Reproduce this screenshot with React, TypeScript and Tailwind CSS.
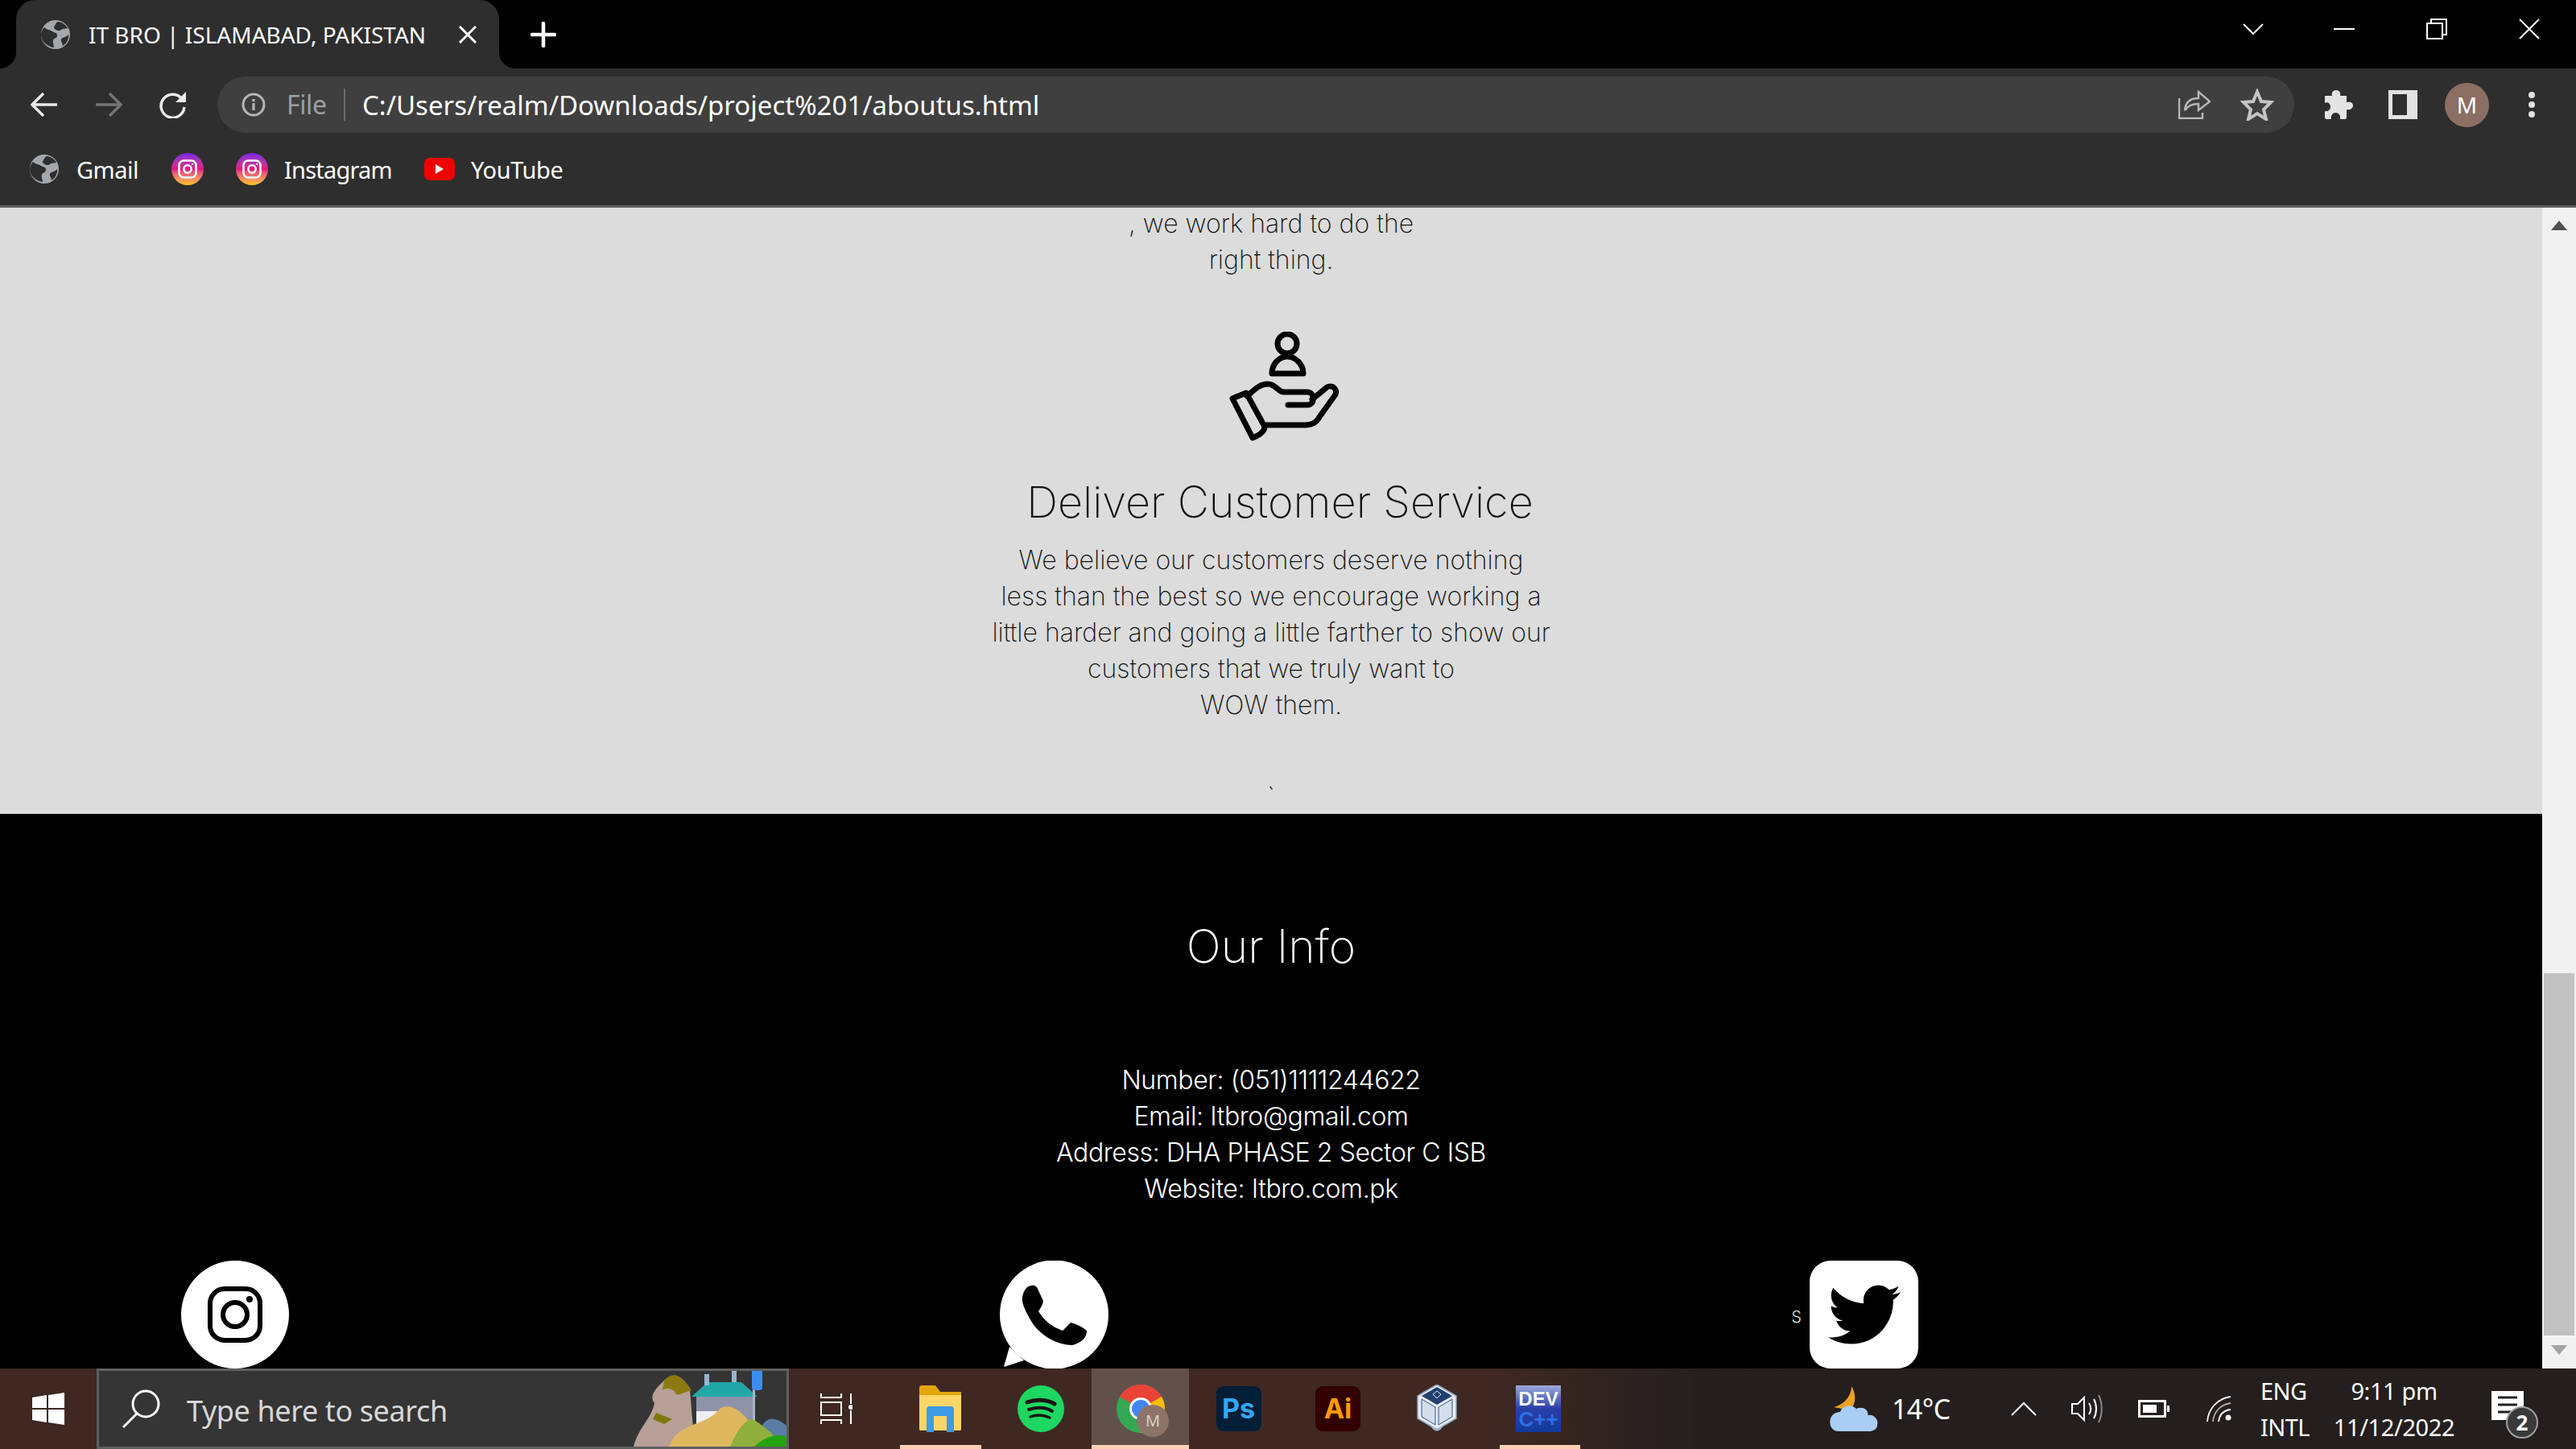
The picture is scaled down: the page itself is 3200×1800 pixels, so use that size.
import React from "react";
import { FaTwitter } from "react-icons/fa";

const ui = "font-['Noto_Sans','Open_Sans',sans-serif]";

function Globe({ cls }: { cls: string }) {
  return (
    <svg viewBox="0 0 36 36" className={cls}>
      <circle cx="18" cy="18" r="18" fill="#a3a8ad" />
      <path d="M4 9c3 3 7 3 10 5s6 1 6 5-4 3-5 6 1 6 1 9C8 33 0 27 0 18c0-3 2-7 4-9zM22 2c5 1 9 4 11 8-3 1-6 0-8 2s-6 1-8-1 0-4 1-6 2-3 4-3zM34 18c1 5-2 11-7 14 0-4-3-5-2-8s6-2 9-6z" fill="#2e2e2e" />
    </svg>
  );
}

function Insta() {
  return (
    <div className="w-[40px] h-[40px] rounded-full bg-linear-to-b from-[#7b1fe4] via-[#e3117f] to-[#ffc400] flex items-center justify-center">
      <svg viewBox="0 0 24 24" className="w-[28px] h-[28px]" fill="none" stroke="#ffffff" strokeWidth="2.2">
        <rect x="3" y="3" width="18" height="18" rx="5" />
        <circle cx="12" cy="12" r="4" />
        <circle cx="17.3" cy="6.7" r="1" fill="#ffffff" stroke="none" />
      </svg>
    </div>
  );
}

function ChromeLogo() {
  return (
    <svg viewBox="0 0 60 60" className="w-[60px] h-[60px]">
      <circle cx="30" cy="30" r="30" fill="#34a853" />
      <path d="M30 30 L4 15 A30 30 0 0 1 56 15 Z" fill="#ea4335" />
      <path d="M30 30 L56 15 A30 30 0 0 1 30 60 Z" fill="#fbbc04" />
      <circle cx="30" cy="30" r="14" fill="#ffffff" />
      <circle cx="30" cy="30" r="11" fill="#4285f4" />
    </svg>
  );
}

function Cortana() {
  return (
    <svg viewBox="0 0 190 94" className="w-[190px] h-[94px] self-end shrink-0 overflow-hidden">
      <path d="M0 94 C6 70 22 60 26 40 C18 30 30 20 38 12 C50 0 62 8 70 24 L76 94 Z" fill="#b6a097" />
      <path d="M38 12 C50 -2 62 8 72 24 L54 30 C50 22 42 20 36 24 Z" fill="#8c7a10" />
      <path d="M28 52 L48 60 L38 66 L24 60 Z" fill="#7f7808" />
      <rect x="78" y="32" width="72" height="62" fill="#8f93a8" />
      <rect x="78" y="50" width="36" height="44" fill="#eeeef4" />
      <path d="M72 32 L92 14 L134 14 L154 32 Z" fill="#22a7a9" />
      <rect x="88" y="4" width="6" height="14" fill="#9bb3cf" />
      <rect x="122" y="0" width="6" height="14" fill="#9bb3cf" />
      <rect x="148" y="6" width="3" height="70" fill="#a9b3c6" />
      <rect x="147" y="-8" width="13" height="32" rx="4" fill="#3d8df0" />
      <path d="M92 74 C92 60 112 60 112 74 V94 H92 Z" fill="#5a6172" />
      <path d="M165 94 L160 68 C168 54 180 60 190 68 V94 Z" fill="#5a7ea3" />
      <path d="M44 94 C56 62 90 70 108 46 C124 38 146 56 160 94 Z" fill="#dfb75f" />
      <path d="M120 94 C130 70 140 60 148 60 C158 66 176 78 184 94 Z" fill="#8fb03c" />
      <path d="M150 94 C160 84 176 76 190 82 V94 Z" fill="#25a30c" />
    </svg>
  );
}

function VBox() {
  return (
    <svg viewBox="0 0 50 60" className="w-[50px] h-[60px]">
      <path d="M25 0 L49 14 V42 L25 56 L1 42 V14 Z" fill="#e8edf5" stroke="#8aa0c0" strokeWidth="1.5" />
      <path d="M25 3 L44 14 L25 25 L6 14 Z" fill="#1f3f6e" />
      <path d="M6 18 L23 28 V50 L6 40 Z" fill="#d5deeb" stroke="#33558a" strokeWidth="1" />
      <path d="M44 18 L27 28 V50 L44 40 Z" fill="#d5deeb" stroke="#33558a" strokeWidth="1" />
      <path d="M17 50 C20 60 30 60 33 50 L25 55 Z" fill="#9fb3cf" />
      <path d="M20 12 L25 8 L30 12 L25 17 Z" fill="none" stroke="#dfe8f5" strokeWidth="1" />
    </svg>
  );
}

export default function App() {
  return (
    <div className={`w-[3200px] h-[1800px] flex flex-col overflow-hidden bg-black ${ui}`}>
      {/* Tab strip */}
      <div className="h-[85px] shrink-0 bg-black flex items-stretch">
        <div className="relative ml-[20px] w-[600px] bg-[#2e2e2e] rounded-t-[24px] flex items-center text-white shrink-0">
          <span className="absolute left-[-20px] bottom-0 w-[20px] h-[20px] bg-[radial-gradient(circle_at_0_0,#000000_19.5px,#2e2e2e_20.5px)]" />
          <span className="absolute right-[-20px] bottom-0 w-[20px] h-[20px] bg-[radial-gradient(circle_at_100%_0,#000000_19.5px,#2e2e2e_20.5px)]" />
          <Globe cls="ml-[31px] w-[36px] h-[36px] shrink-0" />
          <span className="ml-[23px] text-[28px] leading-none whitespace-nowrap w-[420px]">IT BRO | ISLAMABAD, PAKISTAN</span>
          <svg viewBox="0 0 22 22" className="ml-[40px] w-[22px] h-[22px] shrink-0" stroke="#ffffff" strokeWidth="3" fill="none"><path d="M1 1 L21 21 M21 1 L1 21" /></svg>
        </div>
        <svg viewBox="0 0 32 32" className="ml-[39px] w-[32px] h-[32px] self-center" stroke="#ffffff" strokeWidth="4.5" strokeLinecap="round" fill="none"><path d="M16 2 V30 M2 16 H30" /></svg>
        <div className="ml-auto flex items-center h-[75px] pb-[4px]">
          <svg viewBox="0 0 26 14" className="w-[26px] h-[14px]" stroke="#ffffff" strokeWidth="2" fill="none"><path d="M1 1 L13 13 L25 1" /></svg>
          <div className="ml-[87px] w-[26px] h-[2px] bg-white" />
          <svg viewBox="0 0 26 26" className="ml-[89px] w-[26px] h-[26px]" stroke="#ffffff" strokeWidth="2" fill="none"><rect x="1" y="6" width="19" height="19" /><path d="M6 6 V1 H25 V20 H20" /></svg>
          <svg viewBox="0 0 26 26" className="ml-[89px] mr-[45px] w-[26px] h-[26px]" stroke="#ffffff" strokeWidth="2" fill="none"><path d="M1 1 L25 25 M25 1 L1 25" /></svg>
        </div>
      </div>

      {/* Toolbar */}
      <div className="h-[90px] shrink-0 bg-[#2e2e2e] flex items-center">
        <div className="ml-[15px] w-[80px] flex justify-center">
          <svg viewBox="0 0 34 30" className="w-[34px] h-[30px]" stroke="#e8eaed" strokeWidth="3.4" fill="none"><path d="M33 15 H3 M16 1 L2 15 L16 29" /></svg>
        </div>
        <div className="w-[80px] flex justify-center">
          <svg viewBox="0 0 34 30" className="w-[34px] h-[30px]" stroke="#757575" strokeWidth="3.4" fill="none"><path d="M1 15 H31 M18 1 L32 15 L18 29" /></svg>
        </div>
        <div className="w-[80px] flex justify-center">
          <svg viewBox="0 0 34 34" className="w-[34px] h-[34px]" fill="none"><path d="M28.5 10.5 A14.5 14.5 0 1 0 31 20" stroke="#e8eaed" strokeWidth="3.4" /><path d="M33 1 V14 H20 Z" fill="#e8eaed" /></svg>
        </div>
        <div className="ml-[15px] w-[2580px] h-[70px] rounded-full bg-[#3f3f3f] flex items-center pr-[25px]">
          <svg viewBox="0 0 30 30" className="ml-[30px] w-[30px] h-[30px] shrink-0" fill="none"><circle cx="15" cy="15" r="13" stroke="#b4b6b9" strokeWidth="3" /><rect x="13.4" y="13" width="3.2" height="9" fill="#b4b6b9" /><rect x="13.4" y="8" width="3.2" height="3.2" fill="#b4b6b9" /></svg>
          <span className="ml-[26px] w-[71px] text-[32px] leading-none text-[#9aa0a6] tracking-[-0.4px]">File</span>
          <div className="w-[2px] h-[40px] bg-[#6b6b6b]" />
          <span className="ml-[21px] text-[33px] leading-none text-white whitespace-nowrap">C:/Users/realm/Downloads/project%201/aboutus.html</span>
          <div className="ml-auto flex items-center gap-[37px]">
            <svg viewBox="0 0 40 36" className="w-[40px] h-[36px]" fill="none" stroke="#b8b8b8" strokeWidth="2.4"><path d="M1 10 V35 H30 V28" /><path d="M8 25 C9 14 16 10 25 10 V2 L39 14 L25 25 V17 C18 17 12 19 8 25 Z" /></svg>
            <svg viewBox="0 0 42 40" className="w-[42px] h-[40px]" fill="none" stroke="#c4c4c4" strokeWidth="4"><path d="M21 4 L26 16 L38 17 L29 26 L32 38 L21 31 L10 38 L13 26 L4 17 L16 16 Z" /></svg>
          </div>
        </div>
        <div className="ml-[15px] w-[80px] flex justify-center">
          <svg viewBox="0 0 36 36" className="w-[36px] h-[36px]" fill="#e4e4e4"><path d="M1 7 H10 C9 3 11 0 15 0 C19 0 21 3 20 7 H28 V15 C32 14 36 15 36 19 C36 23 32 25 28 24 V34 Q28 36 26 36 H20 C21 31 18 28 14.5 28 C11 28 8 31 9 36 H3 Q1 36 1 34 V26 C5 27 8 24 8 21 C8 17 5 14 1 16 Z" /></svg>
        </div>
        <div className="w-[79px] flex justify-center">
          <svg viewBox="0 0 36 36" className="w-[36px] h-[36px]"><rect width="36" height="36" fill="#e2e2e2" /><rect x="5" y="5" width="18" height="26" fill="#2e2e2e" /></svg>
        </div>
        <div className="w-[81px] flex justify-center">
          <div className="w-[55px] h-[55px] rounded-full bg-[#8d6e63] flex items-center justify-center text-[28px] text-white">M</div>
        </div>
        <div className="w-[79px] flex flex-col items-center gap-[4px]">
          <div className="w-[8px] h-[8px] rounded-full bg-[#e2e2e2]" />
          <div className="w-[8px] h-[8px] rounded-full bg-[#e2e2e2]" />
          <div className="w-[8px] h-[8px] rounded-full bg-[#e2e2e2]" />
        </div>
      </div>

      {/* Bookmarks */}
      <div className="h-[70px] shrink-0 bg-[#2e2e2e] flex items-center pb-[10px] text-white text-[29px] leading-none border-b-[3px] border-[#5f5f5f] box-content">
        <Globe cls="ml-[37px] w-[36px] h-[36px] shrink-0" />
        <span className="ml-[22px] w-[118px] tracking-[-0.5px]">Gmail</span>
        <Insta />
        <div className="ml-[40px]"><Insta /></div>
        <span className="ml-[20px] w-[174px] tracking-[-0.8px]">Instagram</span>
        <div className="w-[38px] h-[28px] rounded-[7px] bg-[#f00000] flex items-center justify-center">
          <svg viewBox="0 0 10 12" className="w-[10px] h-[12px]"><path d="M0 0 L10 6 L0 12 Z" fill="#ffffff" /></svg>
        </div>
        <span className="ml-[20px] tracking-[-0.4px]">YouTube</span>
      </div>

      {/* Page */}
      <div className="flex-1 min-h-0 flex">
        <main className="w-[3158px] overflow-hidden font-['Inter',sans-serif] font-extralight">
          <section className="h-[756px] bg-[#dcdcdc] text-[#111111] flex flex-col items-center text-[32px] leading-[45px] -mt-[3px]">
            <p>, we work hard to do the</p>
            <p>right thing.</p>
            <svg viewBox="0 0 140 136" className="mt-[67px] ml-[36px] w-[140px] h-[136px] shrink-0" fill="none" stroke="#000000" strokeWidth="7" strokeLinejoin="round" strokeLinecap="round">
              <ellipse cx="72" cy="15" rx="12" ry="12" />
              <path d="M53 52 C53 40 62 31 72 31 C82 31 92 40 92 52 Z" />
              <path d="M4 83 L21 76 L44 118 Q44 126 29 132 Z" />
              <path d="M22 80 C30 74 36 65 48 65 C58 65 60 75 68 75 H97 C106 75 107 90 98 91 H73" />
              <path d="M103 84 L119 71 C124 65 135 68 132 78 L112 106 C108 114 102 116 94 116 H44" />
            </svg>
            <h2 className="mt-[45px] ml-[22px] text-[54px] leading-[62px] whitespace-nowrap">Deliver Customer Service</h2>
            <p className="mt-[18px]">We believe our customers deserve nothing</p>
            <p>less than the best so we encourage working a</p>
            <p>little harder and going a little farther to show our</p>
            <p>customers that we truly want to</p>
            <p>WOW them.</p>
            <p className="mt-[69px]">`</p>
          </section>
          <footer className="bg-black text-white flex flex-col">
            <h2 className="mt-[134px] text-center text-[57px] leading-[62px]">Our Info</h2>
            <div className="mt-[112px] text-center text-[32px] tracking-[-0.4px] leading-[45px] font-light">
              <p>Number: (051)1111244622</p>
              <p>Email: Itbro@gmail.com</p>
              <p>Address: DHA PHASE 2 Sector C ISB</p>
              <p>Website: Itbro.com.pk</p>
            </div>
            <div className="mt-[67px] h-[134px] flex items-center">
              <div className="ml-[225px] w-[134px] h-[134px] rounded-full bg-white flex items-center justify-center shrink-0">
                <svg viewBox="0 0 68 70" className="w-[68px] h-[70px]" fill="none" stroke="#000000" strokeWidth="6">
                  <rect x="3" y="3" width="62" height="64" rx="18" />
                  <circle cx="34" cy="35" r="15" />
                  <circle cx="52" cy="16" r="4" fill="#000000" stroke="none" />
                </svg>
              </div>
              <svg viewBox="0 0 135 134" className="ml-[883px] w-[135px] h-[134px] shrink-0">
                <circle cx="67.5" cy="67" r="67.5" fill="#ffffff" />
                <path d="M12 107 L5 132 L30 124 Z" fill="#ffffff" />
                <path d="M34 33 Q42 28 46 33 L54 50 Q54 54 48 63 Q58 80 78 87 L88 77 Q100 80 108 87 Q108 100 90 105 Q62 104 42 80 Q26 55 28 45 Q30 36 34 33 Z" fill="#000000" />
              </svg>
              <span className="ml-[848px] w-[23px] text-[26px]">s</span>
              <div className="w-[135px] h-[134px] rounded-[26px] bg-white flex items-center justify-center shrink-0">
                <FaTwitter className="w-[90px] h-[90px] text-black" />
              </div>
            </div>
          </footer>
        </main>

        {/* Scrollbar */}
        <div className="w-[42px] bg-[#f1f1f1] flex flex-col items-center">
          <svg viewBox="0 0 20 12" className="mt-[16px] w-[20px] h-[12px]"><path d="M10 0 L20 12 H0 Z" fill="#505050" /></svg>
          <div className="mt-[923px] w-[38px] h-[450px] bg-[#c1c1c1]" />
          <svg viewBox="0 0 20 12" className="mt-[12px] w-[20px] h-[12px]"><path d="M10 12 L20 0 H0 Z" fill="#a3a3a3" /></svg>
        </div>
      </div>

      {/* Taskbar */}
      <div className="h-[100px] shrink-0 bg-linear-to-r from-[#3f2822] via-[#3f2822] via-58% to-[#241f1e] to-66% flex items-stretch text-white">
        <div className="w-[120px] flex items-center justify-center">
          <svg viewBox="0 0 40 40" className="w-[40px] h-[40px]" fill="#ffffff"><path d="M0 6 L18 3 V19 H0 Z M20 3 L40 0 V19 H20 Z M0 21 H18 V37 L0 34 Z M20 21 H40 V40 L20 37 Z" /></svg>
        </div>
        <div className="w-[860px] border-[3px] border-[#5f5f5f] bg-[#353535] flex items-center pr-0 overflow-hidden">
          <svg viewBox="0 0 50 50" className="ml-[27px] w-[50px] h-[50px] shrink-0" fill="none" stroke="#ffffff" strokeWidth="3"><circle cx="31" cy="19" r="16" /><path d="M20 31 L3 48" /></svg>
          <span className="ml-[32px] mt-[6px] text-[36px] leading-none text-[#d8d8d8] whitespace-nowrap tracking-[-0.4px]">Type here to search</span>
          <div className="ml-auto flex h-full items-end overflow-hidden"><Cortana /></div>
        </div>
        <div className="w-[127px] flex items-center pl-[39px]">
          <svg viewBox="0 0 40 38" className="w-[40px] h-[38px]" fill="none" stroke="#ffffff" strokeWidth="2"><path d="M1 0 V5 H26 V0 M1 11 H26 V27 H1 Z M1 38 V33 H26 V38 M38 0 V13 M38 21 V38" /><circle cx="38" cy="17" r="3" fill="#ffffff" stroke="none" /></svg>
        </div>
        <div className="relative w-[122px] flex items-center justify-center">
          <svg viewBox="0 0 52 58" className="w-[52px] h-[58px]"><path d="M0 3 Q0 0 3 0 H20 L26 8 H52 V54 Q52 56 50 56 H2 Q0 56 0 54 Z" fill="#e2a60c" /><path d="M0 12 H52 V54 Q52 56 50 56 H2 Q0 56 0 54 Z" fill="#fdd667" /><path d="M9 58 V30 Q9 26 13 26 H39 Q43 26 43 30 V58 H34 V38 H18 V58 Z" fill="#3f9be5" /></svg>
          <div className="absolute bottom-0 left-[11px] w-[101px] h-[5px] bg-[#fdd0b1]" />
        </div>
        <div className="w-[127px] flex items-center justify-center">
          <svg viewBox="0 0 58 58" className="w-[58px] h-[58px]" fill="none" stroke="#191414" strokeWidth="5" strokeLinecap="round"><circle cx="29" cy="29" r="29" fill="#1ed760" stroke="none" /><path d="M12 21 C22 17 36 17 46 23" /><path d="M14 30 C24 27 35 27 43 32" strokeWidth="4" /><path d="M16 39 C24 36 33 37 40 40" strokeWidth="3.4" /></svg>
        </div>
        <div className="relative w-[121px] bg-[#62504c] flex items-center justify-center">
          <ChromeLogo />
          <div className="absolute left-[56px] top-[45px] w-[40px] h-[40px] rounded-full bg-[#8d7468] text-[#d8cfca] text-[20px] flex items-center justify-center">M</div>
          <div className="absolute bottom-0 left-0 w-full h-[5px] bg-[#fdd0b1]" />
        </div>
        <div className="w-[123px] flex items-center justify-center">
          <div className="w-[56px] h-[56px] rounded-[9px] bg-[#001e36] flex items-center justify-center text-[#31a8ff] text-[34px] font-bold leading-none font-['Inter',sans-serif]">Ps</div>
        </div>
        <div className="w-[124px] flex items-center justify-center">
          <div className="w-[56px] h-[56px] rounded-[9px] bg-[#330000] flex items-center justify-center text-[#ff9a00] text-[34px] font-bold leading-none font-['Inter',sans-serif]">Ai</div>
        </div>
        <div className="w-[122px] flex items-center justify-center"><VBox /></div>
        <div className="relative w-[130px] flex items-center justify-center">
          <div className="w-[56px] h-[58px] bg-linear-to-b from-[#9fa8d8] via-[#2a3fa8] to-[#103a9c] flex flex-col items-center justify-center font-['Liberation_Sans',sans-serif] font-bold leading-none overflow-hidden">
            <span className="text-white text-[24px] leading-[26px]">DEV</span>
            <span className="text-[#2f6fe8] text-[26px] leading-[24px] whitespace-nowrap">C++</span>
          </div>
          <div className="absolute bottom-0 left-[17px] w-[100px] h-[5px] bg-[#fdd0b1]" />
        </div>
        <div className="ml-[296px] w-[62px] flex items-center">
          <svg viewBox="0 0 62 56" className="w-[62px] h-[56px]"><path d="M28 0 C34 10 34 22 26 30 L6 26 C16 24 28 14 28 0 Z" fill="#eea21f" /><path d="M12 56 C2 56 0 46 2 40 C4 34 10 32 14 32 C16 24 28 22 34 28 C42 24 50 30 48 36 C56 34 62 42 60 48 C60 54 54 56 50 56 Z" fill="#a9cdf4" /></svg>
        </div>
        <span className="ml-[16px] w-[80px] self-center text-[34px] leading-none tracking-[-0.6px] whitespace-nowrap">14°C</span>
        <div className="ml-[68px] w-[32px] flex items-center">
          <svg viewBox="0 0 32 18" className="w-[32px] h-[18px]" fill="none" stroke="#ffffff" strokeWidth="2"><path d="M1 17 L16 2 L31 17" /></svg>
        </div>
        <div className="ml-[43px] w-[40px] flex items-center">
          <svg viewBox="0 0 40 36" className="w-[40px] h-[36px]" fill="none" stroke="#ffffff" strokeWidth="2"><path d="M1 12 H8 L16 4 V32 L8 24 H1 Z" /><path d="M22 11 C25 15 25 21 22 25" /><path d="M28 6 C32 13 32 23 28 30" /><path d="M34 1 C39 11 39 25 34 35" stroke="#8a8a8a" /></svg>
        </div>
        <div className="ml-[43px] w-[40px] flex items-center">
          <svg viewBox="0 0 40 22" className="w-[40px] h-[22px]" fill="none"><rect x="1.5" y="1.5" width="32" height="19" stroke="#ffffff" strokeWidth="3" /><rect x="6" y="6" width="17" height="10" fill="#ffffff" /><rect x="36" y="7" width="3" height="8" fill="#ffffff" /></svg>
        </div>
        <div className="ml-[45px] w-[32px] flex items-center">
          <svg viewBox="0 0 32 32" className="w-[32px] h-[32px]" fill="none" stroke="#ffffff" strokeWidth="1.8"><path d="M1 32 C2 16 14 3 30 1" /><path d="M8 32 C9 20 17 11 30 9" stroke="#b0b0b0" /><path d="M15 32 C16 24 21 18 30 17" /><circle cx="27" cy="27" r="3.5" fill="#ffffff" stroke="none" /></svg>
        </div>
        <div className="ml-[35px] w-[70px] flex flex-col justify-center gap-[15px] text-[29px] leading-[30px] tracking-[-0.6px] whitespace-nowrap">
          <span>ENG</span>
          <span>INTL</span>
        </div>
        <div className="ml-[16px] w-[160px] flex flex-col items-center justify-center gap-[15px] text-[29px] leading-[30px] tracking-[-0.4px] whitespace-nowrap">
          <span>9:11 pm</span>
          <span>11/12/2022</span>
        </div>
        <div className="relative ml-[41px] w-[60px] flex items-center">
          <svg viewBox="0 0 40 36" className="w-[40px] h-[36px] -mt-[8px]"><rect width="40" height="36" fill="#ffffff" /><path d="M8 8 H32 M8 17 H32 M8 26 H24" stroke="#231f1e" strokeWidth="3" /></svg>
          <div className="absolute left-[18px] top-[47px] w-[40px] h-[40px] rounded-full bg-[#3a3a3a] border-[2px] border-[#a0a0a0] flex items-center justify-center text-[26px] font-bold leading-none">2</div>
        </div>
      </div>
    </div>
  );
}
